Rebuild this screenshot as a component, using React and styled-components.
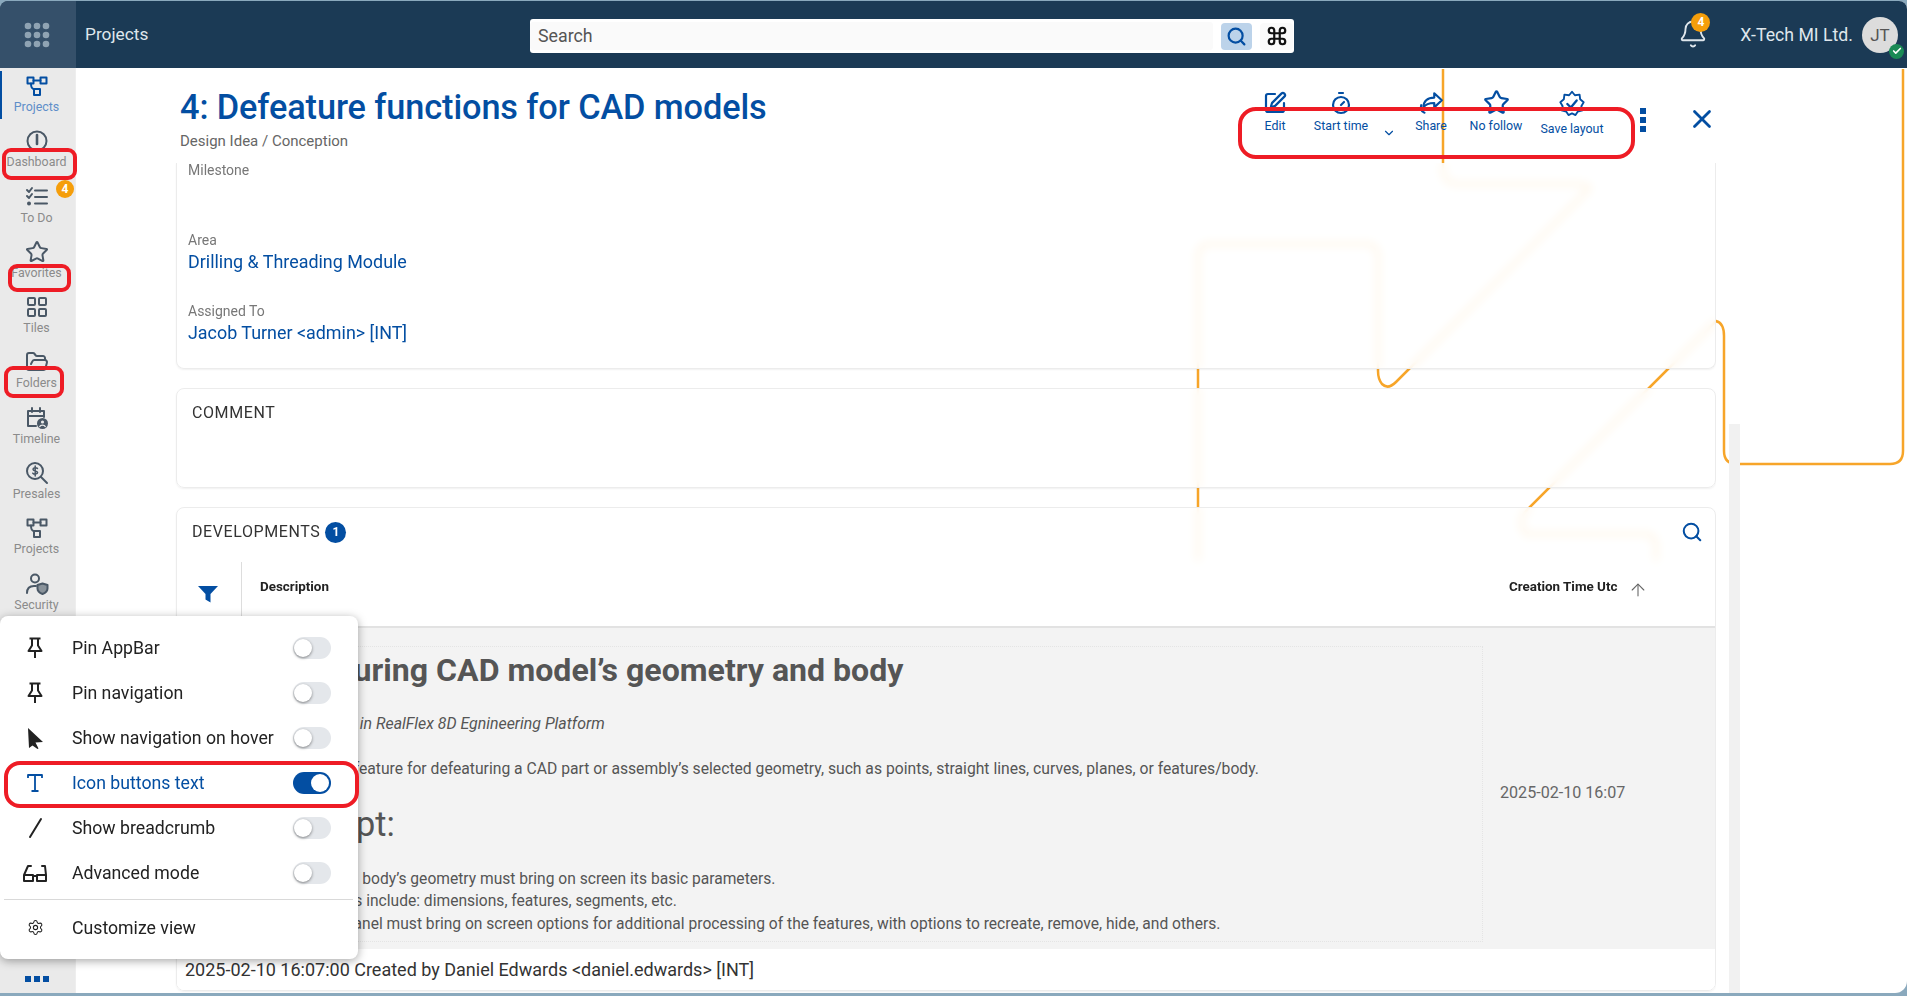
import React from 'react'
import styled, { createGlobalStyle } from 'styled-components'
import {
  Bell, Check, ChevronDown, Command, FolderOpen, LayoutGrid, Search, Settings,
  SquarePen, Star, Timer, X, ArrowUp,
} from 'lucide-react'

const BLUE = '#034ea2'
const ORANGE = '#f59e0b'

const GlobalStyle = createGlobalStyle`
  html, body { margin: 0; padding: 0; background: #8aa9bd; overflow: hidden; }
  body { font-family: Roboto, "Liberation Sans", sans-serif; }
  * { box-sizing: border-box; }
`

const Page = styled.div`
  position: relative;
  margin-top: 1px;
  width: 1907px;
  height: 992px;
  background: #fff;
  border-radius: 8px 8px 12px 0;
  overflow: hidden;
`

const Art = styled.svg`
  position: absolute;
  left: 0;
  top: 0;
`

const TopBar = styled.header`
  position: relative;
  height: 67px;
  display: flex;
  align-items: center;
  background: #1b3a55;
`

const AppsCell = styled.div`
  width: 76px;
  height: 100%;
  display: grid;
  place-items: center;
  padding-right: 3px;
  background: #35506a;
`

const PageName = styled.div`
  margin: -2px 0 0 9px;
  width: 445px;
  font-size: 17.3px;
  color: #dfe6ec;
`

const SearchBox = styled.div`
  width: 764px;
  height: 34px;
  margin-top: 3px;
  display: flex;
  align-items: center;
  gap: 8px;
  padding: 3px 1px 3px 0;
  background: #fff;
  border-radius: 3px;
`

const SearchText = styled.div`
  flex: 1;
  height: 100%;
  padding-left: 8px;
  font-size: 17.8px;
  line-height: 28px;
  color: #555;
  background: #fafafa;
  border-radius: 3px;
`

const SearchBtn = styled.div`
  width: ${p => p.$w}px;
  height: 27px;
  display: grid;
  place-items: center;
  background: ${p => p.$bg};
  border-radius: 4px;
  color: ${p => p.$color};
`

const BarRight = styled.div`
  margin-left: auto;
  display: flex;
  align-items: center;
`

const BellWrap = styled.div`
  position: relative;
  width: 30px;
  height: 32px;
  margin-right: 32px;
  color: #dfe6ec;
`

const CountBadge = styled.span`
  position: absolute;
  left: ${p => p.$left}px;
  top: ${p => p.$top}px;
  width: ${p => p.$size}px;
  height: ${p => p.$size}px;
  border-radius: 50%;
  display: grid;
  place-items: center;
  background: ${ORANGE};
  color: #fff;
  font-size: 12px;
  font-weight: 700;
`

const Company = styled.div`
  font-size: 17.7px;
  color: #dfe6ec;
  margin-right: 9px;
`

const Avatar = styled.div`
  position: relative;
  width: 36px;
  height: 36px;
  margin-right: 9px;
  border-radius: 50%;
  display: grid;
  place-items: center;
  background: #dcdcdc;
  color: #555;
  font-size: 17px;
`

const OnlineDot = styled.span`
  position: absolute;
  right: -6px;
  bottom: -6px;
  width: 15px;
  height: 15px;
  border-radius: 50%;
  display: grid;
  place-items: center;
  background: #1a8a55;
  color: #fff;
`

const Layout = styled.div`
  position: relative;
  display: flex;
  height: 925px;
`

const Sidebar = styled.nav`
  position: relative;
  width: 76px;
  display: flex;
  flex-direction: column;
  padding: 3px 2px 0 0;
  background: #eaeaea;
  border-right: 1px solid #eee;
`

const NavItem = styled.div`
  position: relative;
  height: 55.3px;
  display: flex;
  flex-direction: column;
  align-items: center;
  padding-top: 3px;
  color: ${p => (p.$active ? BLUE : '#4a5866')};
  &::before {
    content: '';
    display: ${p => (p.$active ? 'block' : 'none')};
    position: absolute;
    left: 0;
    top: 0;
    width: 2px;
    height: 48px;
    background: ${BLUE};
  }
`

const NavLabel = styled.span`
  margin-top: 2px;
  font-size: 12.4px;
  line-height: 14px;
  color: ${p => (p.$active ? '#5f8ec9' : '#8b8b8b')};
`

const MoreDots = styled.div`
  margin-top: auto;
  margin-bottom: 11px;
  display: flex;
  justify-content: center;
  gap: 3px;
  span { width: 6px; height: 6px; background: ${BLUE}; }
`

const Main = styled.main`
  flex: 1;
  display: flex;
  flex-direction: column;
  min-width: 0;
`

const PageHead = styled.div`
  height: 95px;
  display: flex;
  padding-left: 104px;
  flex-shrink: 0;
`

const TitleBlock = styled.div`
  padding-top: 18px;
`

const Title = styled.h1`
  margin: 0;
  font-size: 34.3px;
  line-height: 42px;
  font-weight: 500;
  color: ${BLUE};
  letter-spacing: -0.1px;
`

const Crumb = styled.div`
  margin-top: 4px;
  font-size: 15px;
  line-height: 18px;
  color: #666;
`

const Actions = styled.div`
  margin-left: auto;
  margin-right: 169px;
  display: flex;
  align-items: flex-start;
  color: ${BLUE};
`

const Action = styled.div`
  width: ${p => p.$w}px;
  display: flex;
  flex-direction: column;
  align-items: center;
  padding-top: ${p => p.$top}px;
`

const ActionLabel = styled.span`
  margin-top: ${p => p.$gap}px;
  font-size: 12.4px;
  line-height: 14px;
  color: ${BLUE};
`

const DropArrow = styled.div`
  width: 12px;
  height: 16px;
  margin-top: 57px;
  display: grid;
  place-items: center;
`

const DotsColumn = styled.div`
  width: 46px;
  margin-top: 40px;
  display: flex;
  flex-direction: column;
  align-items: center;
  gap: 3px;
  span { width: 6px; height: 6px; background: ${BLUE}; }
`

const CloseBtn = styled.div`
  width: 72px;
  margin-top: 36px;
  display: flex;
  justify-content: center;
`

const Content = styled.div`
  flex: 1;
  display: flex;
  flex-direction: column;
  gap: 19px;
  width: 1640px;
  padding-left: 100px;
  overflow: hidden;
`

const Card = styled.section`
  width: 1540px;
  flex-shrink: 0;
  background: rgba(255, 255, 255, 0.82);
  backdrop-filter: blur(5px);
  border: 1px solid #ececec;
  border-radius: 8px;
  box-shadow: 0 1px 2px rgba(0, 0, 0, 0.06);
`

const InfoCard = styled(Card)`
  height: 206px;
  padding-left: 11px;
  border-top: 0;
  border-radius: 0 0 8px 8px;
`

const Field = styled.div`
  height: ${p => p.$h}px;
`

const FieldLabel = styled.div`
  font-size: 14px;
  line-height: 14px;
  color: #777;
`

const FieldValue = styled.div`
  font-size: 17.9px;
  line-height: 30px;
  color: ${BLUE};
`

const CommentCard = styled(Card)`
  height: 100px;
  padding: 15px 15px;
`

const SectionTitle = styled.div`
  display: flex;
  align-items: center;
  gap: 5px;
  font-size: 16px;
  line-height: 18px;
  letter-spacing: 0.6px;
  color: #333;
`

const Count = styled.span`
  width: 21px;
  height: 21px;
  border-radius: 50%;
  display: grid;
  place-items: center;
  background: ${BLUE};
  color: #fff;
  font-size: 12px;
  font-weight: 700;
  letter-spacing: 0;
`

const DevCard = styled(Card)`
  height: 484px;
  display: flex;
  flex-direction: column;
  overflow: hidden;
`

const DevHead = styled.div`
  height: 54px;
  padding: 0 12px 6px 15px;
  display: flex;
  align-items: center;
  justify-content: space-between;
  color: ${BLUE};
`

const TableHead = styled.div`
  height: 66px;
  display: grid;
  grid-template-columns: 65px 1fr auto;
  border-bottom: 2px solid #e2e2e2;
`

const FilterCell = styled.div`
  display: flex;
  justify-content: center;
  padding: 23px 3px 0 0;
  border-right: 1px solid #ddd;
  color: ${BLUE};
`

const HeadText = styled.div`
  padding: 17px 0 0 18px;
  font-size: 13.4px;
  line-height: 16px;
  font-weight: 700;
  color: #222;
`

const SortCell = styled.div`
  display: flex;
  align-items: flex-start;
  gap: 11px;
  width: 206px;
  color: #666;
  svg { margin-top: 18px; }
  ${HeadText} { padding-left: 0; }
`

const DevRow = styled.div`
  height: 321px;
  display: grid;
  grid-template-columns: 1238px 1fr;
  align-items: center;
  padding: 18px 0 7px 68px;
  background: #f3f3f3;
  color: #555;
`

const Markdown = styled.div`
  height: 296px;
  padding: 4px 0 0 14px;
  border: 1px dotted #e4e4e4;
  border-left: 0;
  white-space: nowrap;
`

const DocTitle = styled.h1`
  margin: -1px 0 0;
  font-size: 32.1px;
  line-height: 40px;
  font-weight: 700;
`

const DocLead = styled.p`
  margin: 23px 0 0;
  font-size: 15.9px;
  line-height: 22px;
  font-style: italic;
`

const DocText = styled.p`
  margin: 23px 0 0;
  font-size: 15.7px;
  line-height: 22px;
`

const DocHeading = styled.h2`
  margin: 24px 0 0;
  font-size: 34.3px;
  line-height: 40px;
  font-weight: 400;
`

const DocList = styled.ul`
  margin: 24px 0 0;
  padding: 0 0 0 23px;
  font-size: 15.6px;
  line-height: 22.3px;
`

const RowDate = styled.div`
  margin-bottom: 4px;
  padding-left: 17px;
  font-size: 16.1px;
  color: #666;
`

const DevFoot = styled.div`
  flex: 1;
  padding-left: 8px;
  display: flex;
  align-items: center;
  background: #fff;
  font-size: 18px;
  color: #333;
`

const ScrollTrack = styled.div`
  position: absolute;
  left: 1729px;
  top: 423px;
  bottom: 0;
  width: 11px;
  background: #f1f1f1;
`

const ViewMenu = styled.div`
  position: absolute;
  left: 0;
  top: 615px;
  width: 358px;
  height: 343px;
  padding-top: 9px;
  background: #fff;
  border-radius: 8px;
  box-shadow: 0 2px 10px rgba(0, 0, 0, 0.35);
`

const MenuRow = styled.div`
  height: 45px;
  display: flex;
  align-items: center;
  color: ${p => (p.$on ? BLUE : '#222')};
  font-size: 17.7px;
`

const MenuIcon = styled.div`
  width: 72px;
  padding-right: 2px;
  display: grid;
  place-items: center;
`

const MenuText = styled.div`
  flex: 1;
`

const Toggle = styled.div`
  position: relative;
  width: 38px;
  height: 22px;
  margin-right: 27px;
  border-radius: 11px;
  background: ${p => (p.$on ? BLUE : '#e4e7eb')};
  &::after {
    content: '';
    position: absolute;
    top: 2px;
    left: ${p => (p.$on ? '18px' : '1px')};
    width: 18px;
    height: 18px;
    border-radius: 50%;
    background: #fff;
    box-shadow: ${p => (p.$on ? 'none' : '0 1px 3px rgba(0,0,0,.45)')};
  }
`

const MenuDivider = styled.div`
  margin: 4px 5px 5px 4px;
  height: 1px;
  background: #d9d9d9;
`

const RedMark = styled.div`
  position: absolute;
  left: ${p => p.$x}px;
  top: ${p => p.$y}px;
  width: ${p => p.$w}px;
  height: ${p => p.$h}px;
  border: 4px solid #ee1c25;
  border-radius: ${p => p.$r}px;
  pointer-events: none;
`

const stroke = { fill: 'none', stroke: 'currentColor', strokeWidth: 2, strokeLinecap: 'round', strokeLinejoin: 'round' }

const AppsIcon = () => (
  <svg width="26" height="26" viewBox="0 0 26 26" fill="#8fa3b3">
    {[4, 13, 22].flatMap(y => [4, 13, 22].map(x => <circle key={`${x}-${y}`} cx={x} cy={y} r="3.3" />))}
  </svg>
)

const FlowIcon = () => (
  <svg width="24" height="24" viewBox="0 0 24 24" {...stroke}>
    <rect x="2.5" y="3.5" width="6" height="6" />
    <rect x="15.5" y="3.5" width="6" height="6" />
    <rect x="9" y="15" width="6" height="6" />
    <path d="M8.5 6.5h7M6 9.5c0 3.5 1.5 5.5 3 5.5" />
  </svg>
)

const GaugeIcon = () => (
  <svg width="24" height="24" viewBox="0 0 24 24" {...stroke}>
    <circle cx="12" cy="12" r="9.5" />
    <path d="M12 6v9" strokeWidth="2.6" />
  </svg>
)

const TodoIcon = () => (
  <svg width="24" height="24" viewBox="0 0 24 24" {...stroke}>
    <path d="M2 5l2 2 3-4M2 11l2 2 3-4M10 5.5h12M10 12h12M10 18.5h12" />
    <circle cx="4" cy="18.5" r="1" fill="currentColor" />
  </svg>
)

const TimelineIcon = () => (
  <svg width="24" height="24" viewBox="0 0 24 24" {...stroke}>
    <path d="M11 20H3V5h16v6M3 10h16M7 2v4M15 2v4" />
    <circle cx="17.5" cy="17.5" r="5.5" fill="currentColor" stroke="none" />
    <circle cx="17.5" cy="16" r="1.6" fill="#eaeaea" stroke="none" />
    <path d="M14.8 20.5c.8-1.8 4.6-1.8 5.4 0" stroke="#eaeaea" strokeWidth="1.4" />
  </svg>
)

const PresalesIcon = () => (
  <svg width="24" height="24" viewBox="0 0 24 24" {...stroke}>
    <circle cx="10" cy="10" r="8" />
    <path d="M16 16l6 6" />
    <path d="M12.5 7.5c-.8-1-4.5-1.2-4.5.8 0 2.2 4.6 1 4.6 3.3 0 2-3.8 1.8-4.8.6M10.2 5v10" strokeWidth="1.5" />
  </svg>
)

const SecurityIcon = () => (
  <svg width="24" height="24" viewBox="0 0 24 24" {...stroke}>
    <circle cx="10" cy="6.5" r="4" />
    <path d="M2 21c0-4.5 2.5-7 7-7h2" />
    <path d="M17.5 11.5l5 1.5v3.5c0 3-2.5 4.5-5 5.5-2.5-1-5-2.5-5-5.5V13z" fill="currentColor" fillOpacity=".6" />
  </svg>
)

const ShareIcon = () => (
  <svg width="26" height="26" viewBox="0 0 24 24" {...stroke}>
    <path d="M15 3l7 6.5-7 6.5v-4c-5 0-8 1-10 4 0-6 4-9 10-9z" />
    <path d="M3 14c-1 3 0 6 3 7" />
  </svg>
)

const BadgeGearIcon = () => (
  <svg width="28" height="28" viewBox="0 0 24 24" {...stroke} strokeWidth="1.6">
    <path d="M12 1.5l2.5 3 4-.5.5 4 3 2.5-2 3.5 1 3.5-4 1-2 3-3-1.5-3 1.5-2-3-4-1 1-3.5-2-3.5 3-2.5.5-4 4 .5z" />
    <path d="M8 12l3 3 5-6" strokeWidth="2" />
  </svg>
)

const FilterIcon = () => (
  <svg width="20" height="18" viewBox="0 0 20 18" fill="currentColor">
    <path d="M0 1h20l-7.5 8v8.500l-5-3V9z" />
  </svg>
)

const PinIcon = () => (
  <svg width="24" height="24" viewBox="0 0 24 24" {...stroke} strokeLinecap="butt">
    <path d="M6.5 2.5h11M9 2.5v7L5.5 15h13L15 9.5v-7M12 15v7" />
  </svg>
)

const CursorIcon = () => (
  <svg width="24" height="24" viewBox="0 0 24 24" fill="currentColor">
    <path d="M5 2l15 14-7.5.5 3 6-1 .5-5-3.5L6 22z" />
  </svg>
)

const SerifT = () => (
  <svg width="24" height="24" viewBox="0 0 24 24" {...stroke} strokeWidth="1.8" strokeLinecap="butt">
    <path d="M5 7V4h14v3M12 4v16M8.5 20h7" />
  </svg>
)

const SlashIcon = () => (
  <svg width="24" height="24" viewBox="0 0 24 24" {...stroke}>
    <path d="M18 3L7 21" />
  </svg>
)

const GlassesIcon = () => (
  <svg width="26" height="24" viewBox="0 0 26 24" {...stroke}>
    <path d="M2 20v-6h9v6zM15 20v-6h9v6zM11 15h4M2 14l4-9h3M24 14l-1-9h-3" />
  </svg>
)

const navItems = [
  { label: 'Projects', Icon: FlowIcon, active: true },
  { label: 'Dashboard', Icon: GaugeIcon },
  { label: 'To Do', Icon: TodoIcon, badge: 4 },
  { label: 'Favorites', Icon: () => <Star size={24} strokeWidth={2} /> },
  { label: 'Tiles', Icon: () => <LayoutGrid size={24} strokeWidth={2} /> },
  { label: 'Folders', Icon: () => <FolderOpen size={24} strokeWidth={2} /> },
  { label: 'Timeline', Icon: TimelineIcon },
  { label: 'Presales', Icon: PresalesIcon },
  { label: 'Projects', Icon: FlowIcon },
  { label: 'Security', Icon: SecurityIcon },
]

const menuItems = [
  { label: 'Pin AppBar', icon: <PinIcon /> },
  { label: 'Pin navigation', icon: <PinIcon /> },
  { label: 'Show navigation on hover', icon: <CursorIcon /> },
  { label: 'Icon buttons text', icon: <SerifT />, on: true },
  { label: 'Show breadcrumb', icon: <SlashIcon /> },
  { label: 'Advanced mode', icon: <GlassesIcon /> },
]

const marks = [
  { x: 2, y: 147, w: 75, h: 32, r: 9 },
  { x: 8, y: 263, w: 63, h: 28, r: 9 },
  { x: 4, y: 365, w: 60, h: 32, r: 9 },
  { x: 4, y: 760, w: 355, h: 47, r: 16 },
  { x: 1238, y: 106, w: 397, h: 52, r: 18 },
]

const App = () => (
  <Page>
    <GlobalStyle />
    <Art width="1907" height="992" viewBox="0 0 1907 992" fill="none" stroke="#f7a529" strokeWidth="2.5">
      <path d="M1443 68V168Q1443 183 1458 183H1575Q1595 183 1587 190L1396 381Q1388 389 1382 383Q1378 378 1378 370V255Q1378 243 1366 243H1210Q1198 243 1198 255V560" />
      <path d="M1903 68V450Q1903 463 1890 463H1737Q1724 463 1724 450V335Q1724 322 1716 320L1527 509Q1517 519 1525 533H1645Q1656 533 1656 545V560" />
    </Art>
    <TopBar>
      <AppsCell><AppsIcon /></AppsCell>
      <PageName>Projects</PageName>
      <SearchBox>
        <SearchText>Search</SearchText>
        <SearchBtn $w={31} $bg="#bcd3ea" $color={BLUE}><Search size={21} strokeWidth={2.5} /></SearchBtn>
        <SearchBtn $w={33} $bg="#fafafa" $color="#111"><Command size={22} strokeWidth={2.4} /></SearchBtn>
      </SearchBox>
      <BarRight>
        <BellWrap>
          <Bell size={30} strokeWidth={1.5} />
          <CountBadge $left={13} $top={-6} $size={19}>4</CountBadge>
        </BellWrap>
        <Company>X-Tech MI Ltd.</Company>
        <Avatar>
          JT
          <OnlineDot><Check size={10} strokeWidth={4} /></OnlineDot>
        </Avatar>
      </BarRight>
    </TopBar>
    <Layout>
      <Sidebar>
        {navItems.map(({ label, Icon, active, badge }, i) => (
          <NavItem key={i} $active={active}>
            <Icon />
            <NavLabel $active={active}>{label}</NavLabel>
            {badge && <CountBadge $left={56} $top={-2} $size={18}>{badge}</CountBadge>}
          </NavItem>
        ))}
        <MoreDots><span /><span /><span /></MoreDots>
      </Sidebar>
      <Main>
        <PageHead>
          <TitleBlock>
            <Title>4: Defeature functions for CAD models</Title>
            <Crumb>Design Idea / Conception</Crumb>
          </TitleBlock>
          <Actions>
            <Action $w={50} $top={23}><SquarePen size={24} strokeWidth={2.2} /><ActionLabel $gap={4}>Edit</ActionLabel></Action>
            <Action $w={82} $top={23}><Timer size={24} strokeWidth={2.2} /><ActionLabel $gap={4}>Start time</ActionLabel></Action>
            <DropArrow><ChevronDown size={14} /></DropArrow>
            <Action $w={74} $top={22}><ShareIcon /><ActionLabel $gap={3}>Share</ActionLabel></Action>
            <Action $w={56} $top={21}><Star size={27} /><ActionLabel $gap={3}>No follow</ActionLabel></Action>
            <Action $w={96} $top={22}><BadgeGearIcon /><ActionLabel $gap={4}>Save layout</ActionLabel></Action>
            <DotsColumn><span /><span /><span /></DotsColumn>
            <CloseBtn><X size={30} strokeWidth={2.2} /></CloseBtn>
          </Actions>
        </PageHead>
        <Content>
          <InfoCard>
            <Field $h={69.5}><FieldLabel>Milestone</FieldLabel></Field>
            <Field $h={71.5}><FieldLabel>Area</FieldLabel><FieldValue>Drilling &amp; Threading Module</FieldValue></Field>
            <Field $h={60}><FieldLabel>Assigned To</FieldLabel><FieldValue>Jacob Turner &lt;admin&gt; [INT]</FieldValue></Field>
          </InfoCard>
          <CommentCard><SectionTitle>COMMENT</SectionTitle></CommentCard>
          <DevCard>
            <DevHead>
              <SectionTitle>DEVELOPMENTS <Count>1</Count></SectionTitle>
              <Search size={22} strokeWidth={2.2} />
            </DevHead>
            <TableHead>
              <FilterCell><FilterIcon /></FilterCell>
              <HeadText>Description</HeadText>
              <SortCell>
                <HeadText>Creation Time Utc</HeadText>
                <ArrowUp size={20} strokeWidth={1.3} />
              </SortCell>
            </TableHead>
            <DevRow>
              <Markdown>
                <DocTitle>Defeaturing CAD model’s geometry and body</DocTitle>
                <DocLead>Defeature tool in RealFlex 8D Egnineering Platform</DocLead>
                <DocText>Create a new feature for defeaturing a CAD part or assembly’s selected geometry, such as points, straight lines, curves, planes, or features/body.</DocText>
                <DocHeading>Concept:</DocHeading>
                <DocList>
                  <li>Selecting a body’s geometry must bring on screen its basic parameters.</li>
                  <li>Parameters include: dimensions, features, segments, etc.</li>
                  <li>The side panel must bring on screen options for additional processing of the features, with options to recreate, remove, hide, and others.</li>
                </DocList>
              </Markdown>
              <RowDate>2025-02-10 16:07</RowDate>
            </DevRow>
            <DevFoot>2025-02-10 16:07:00 Created by Daniel Edwards &lt;daniel.edwards&gt; [INT]</DevFoot>
          </DevCard>
        </Content>
      </Main>
    </Layout>
    <ScrollTrack />
    <ViewMenu>
      {menuItems.map(({ label, icon, on }) => (
        <MenuRow key={label} $on={on}>
          <MenuIcon>{icon}</MenuIcon>
          <MenuText>{label}</MenuText>
          <Toggle $on={on} />
        </MenuRow>
      ))}
      <MenuDivider />
      <MenuRow>
        <MenuIcon><Settings size={17} strokeWidth={1.5} /></MenuIcon>
        <MenuText>Customize view</MenuText>
      </MenuRow>
    </ViewMenu>
    {marks.map(m => <RedMark key={m.y} $x={m.x} $y={m.y} $w={m.w} $h={m.h} $r={m.r} />)}
  </Page>
)

export default App
